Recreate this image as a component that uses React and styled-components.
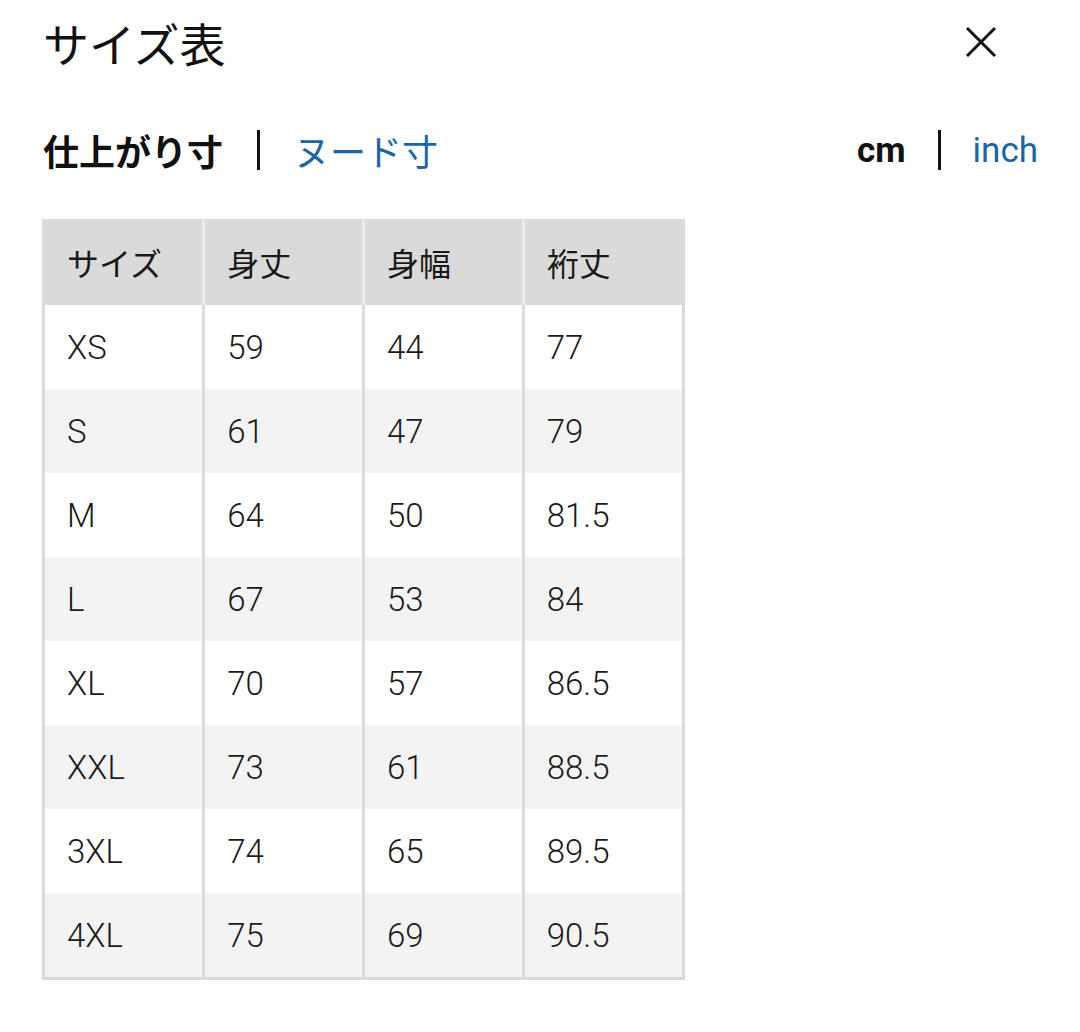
import React from 'react';
import styled, { createGlobalStyle } from 'styled-components';

const GlobalStyle = createGlobalStyle`
  body {
    margin: 0;
    background: #fff;
    font-family: Roboto, "Noto Sans CJK JP", sans-serif;
    color: #1a1a1a;
  }
`;

const Page = styled.div`
  width: 1080px;
  padding: 10px 42px 0 42px;
  box-sizing: border-box;
`;

const TopBar = styled.div`
  display: flex;
  justify-content: space-between;
  align-items: center;
  height: 64px;
  padding-left: 1px;
`;

const Title = styled.h1`
  margin: 0;
  font-family: "Noto Sans CJK JP", sans-serif;
  font-weight: 400;
  font-size: 46px;
  line-height: 64px;
  color: #111;
`;

const CloseButton = styled.button`
  border: 0;
  background: none;
  padding: 0;
  margin-right: 41px;
  width: 32px;
  height: 32px;
  cursor: pointer;
`;

const Toggles = styled.div`
  display: flex;
  justify-content: space-between;
  align-items: center;
  margin-top: 46px;
  height: 60px;
  padding-left: 1px;
`;

const ToggleGroup = styled.div`
  display: flex;
  align-items: center;
`;

const Option = styled.span`
  font-family: ${p => (p.$latin ? 'Roboto, sans-serif' : '"Noto Sans CJK JP", sans-serif')};
  font-size: ${p => (p.$latin ? '35px' : '36px')};
  font-weight: ${p => (p.$active ? 700 : 400)};
  color: ${p => (p.$active ? '#111' : '#1b64a6')};
  line-height: 1;
`;

const Divider = styled.span`
  width: 3px;
  height: 40px;
  background: #111;
  margin: 0 ${p => p.$gap || 34}px;
`;

const Table = styled.table`
  margin-top: 39px;
  border-collapse: collapse;
  width: 643px;
  border: 3px solid #dadada;
  border-top: 0;
`;

const HeadCell = styled.th`
  background: #dadada;
  font-family: "Noto Sans CJK JP", sans-serif;
  font-weight: 400;
  font-size: 32px;
  text-align: left;
  padding: 0 0 0 22px;
  height: 86px;
  color: #1a1a1a;
  border-left: 3px solid #ececec;
  &:first-child {
    border-left: 0;
  }
`;

const Row = styled.tr`
  background: ${p => (p.$shade ? '#f3f3f3' : '#fff')};
`;

const Cell = styled.td`
  font-family: Roboto, sans-serif;
  font-weight: 300;
  font-size: 33px;
  padding: 0 0 0 22px;
  height: 84px;
  width: 137px;
  color: #1a1a1a;
  border-left: 3px solid #dadada;
  &:first-child {
    border-left: 0;
  }
`;

const headers = ['サイズ', '身丈', '身幅', '裄丈'];

const rows = [
  ['XS', '59', '44', '77'],
  ['S', '61', '47', '79'],
  ['M', '64', '50', '81.5'],
  ['L', '67', '53', '84'],
  ['XL', '70', '57', '86.5'],
  ['XXL', '73', '61', '88.5'],
  ['3XL', '74', '65', '89.5'],
  ['4XL', '75', '69', '90.5'],
];

const App = () => {
  return (
    <>
      <GlobalStyle />
      <Page>
        <TopBar>
          <Title>サイズ表</Title>
          <CloseButton aria-label="close">
            <svg width="32" height="32" viewBox="0 0 32 32">
              <path d="M2 2 L30 30 M30 2 L2 30" stroke="#111" strokeWidth="3" fill="none" />
            </svg>
          </CloseButton>
        </TopBar>

        <Toggles>
          <ToggleGroup>
            <Option $active>仕上がり寸</Option>
            <Divider />
            <Option>ヌード寸</Option>
          </ToggleGroup>
          <ToggleGroup>
            <Option $active $latin>cm</Option>
            <Divider $gap={32} />
            <Option $latin>inch</Option>
          </ToggleGroup>
        </Toggles>

        <Table>
          <thead>
            <tr>
              {headers.map(h => (
                <HeadCell key={h}>{h}</HeadCell>
              ))}
            </tr>
          </thead>
          <tbody>
            {rows.map((r, i) => (
              <Row key={r[0]} $shade={i % 2 === 1}>
                {r.map((v, j) => (
                  <Cell key={j}>{v}</Cell>
                ))}
              </Row>
            ))}
          </tbody>
        </Table>
      </Page>
    </>
  );
};

export default App;
